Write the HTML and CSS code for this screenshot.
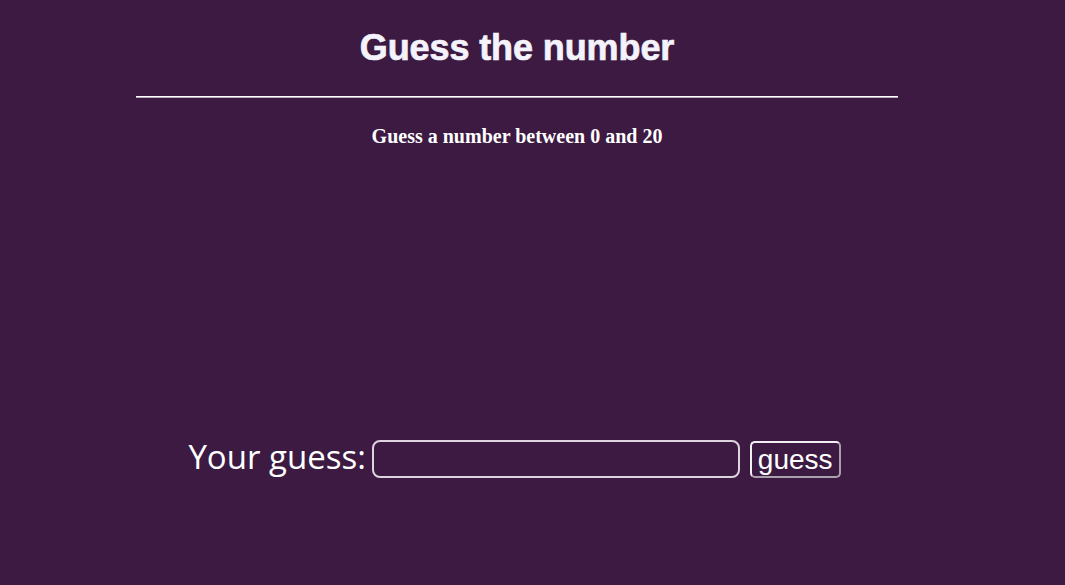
FILE: index.html
```html
<!DOCTYPE html>
<html lang="en">
<head>
<meta charset="utf-8">
<title>Guess the number</title>
<link rel="stylesheet" href="styles.css">
</head>
<body>
<main class="game">
  <h1 class="title">Guess the number</h1>
  <hr class="rule">
  <h3 class="subtitle">Guess a number between 0 and 20</h3>
  <form class="guess-form">
    <label class="guess-label" for="guess">Your guess:</label>
    <input class="guess-input" id="guess" type="text">
    <button class="guess-button" type="button">guess</button>
  </form>
</main>
</body>
</html>
```
FILE: styles.css
```css
html, body {
  margin: 0;
  padding: 0;
}
body {
  background: #3c1a42;
  color: #ffffff;
  height: 585px;
  overflow: hidden;
}
.game {
  width: 762px;
  margin-left: 136px;
  padding-top: 28px;
}
.title {
  margin: 0;
  font-family: "Liberation Sans", Arial, sans-serif;
  font-weight: bold;
  font-size: 36px;
  line-height: 40px;
  letter-spacing: -0.1px;
  -webkit-text-stroke: 0.7px #f4f2fa;
  text-align: center;
  color: #f4f2fa;
}
.rule {
  margin: 28px 0 0 0;
  height: 0;
  border: 0;
  border-top: 1px solid #ffffff;
  border-bottom: 1px solid #b8aebc;
}
.subtitle {
  margin: 27px 0 0 0;
  font-family: "Liberation Serif", "Times New Roman", serif;
  font-weight: bold;
  font-size: 20px;
  line-height: 23px;
  text-align: center;
  color: #ffffff;
}
.guess-form {
  display: flex;
  align-items: center;
  justify-content: center;
  margin-top: 289px;
  padding-right: 5px;
}
.guess-label {
  font-family: "Open Sans", "Segoe UI", sans-serif;
  font-size: 33px;
  line-height: 40px;
  margin-bottom: 4px;
  color: #ffffff;
}
.guess-input {
  box-sizing: border-box;
  width: 368px;
  height: 38px;
  margin: 0 0 0 6px;
  background: transparent;
  border: 2px solid #ddd4df;
  border-radius: 8px;
  color: #ffffff;
  font-size: 24px;
  padding: 0 8px;
  outline: none;
}
.guess-button {
  box-sizing: border-box;
  height: 37px;
  margin: 1px 0 0 10px;
  padding: 0 6px;
  background: transparent;
  border: 2px solid;
  border-color: #f2eef3 #a9a1ac #a9a1ac #f2eef3;
  border-radius: 5px;
  color: #ffffff;
  font-family: "Liberation Sans", Arial, sans-serif;
  font-size: 28px;
  line-height: 33px;
}
```
